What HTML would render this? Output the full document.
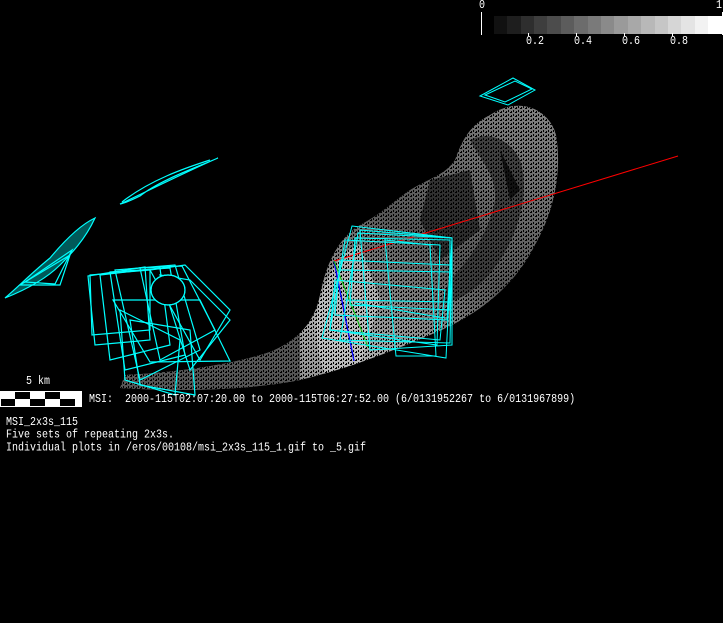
<!DOCTYPE html>
<html><head><meta charset="utf-8"><style>
html,body{margin:0;padding:0;background:#000;width:723px;height:623px;overflow:hidden}
.t{position:absolute;font-family:"Liberation Mono",monospace;font-size:10px;color:#fff;white-space:pre;line-height:12px;transform:scaleY(1.15);transform-origin:0 0}
</style></head><body>
<svg width="723" height="623" style="position:absolute;left:0;top:0">
<defs>
<linearGradient id="g1" x1="0" y1="1" x2="1" y2="0">
<stop offset="0" stop-color="#555"/><stop offset="0.35" stop-color="#aaa"/><stop offset="0.6" stop-color="#555"/><stop offset="1" stop-color="#888"/>
</linearGradient>
<pattern id="sp" width="5" height="4" patternUnits="userSpaceOnUse">
<rect x="0" y="0" width="2" height="1" fill="#000"/><rect x="3" y="2" width="1" height="2" fill="#000"/><rect x="1" y="3" width="1" height="1" fill="#000"/>
</pattern>
<clipPath id="cb"><path d="M490,115 C520,95 550,110 556,135 C562,170 555,210 535,245 C515,285 480,315 430,335 C390,352 350,368 300,380 C250,390 180,392 120,388 L125,375 C180,372 230,365 270,352 C300,340 315,320 320,295 C325,270 335,240 360,225 C380,215 395,200 410,190 C430,178 445,175 455,160 C462,140 470,125 490,115 Z"/></clipPath>
</defs>
<g>
<rect x="494" y="16" width="14" height="18" fill="#111"/>
<rect x="507" y="16" width="14" height="18" fill="#1e1e1e"/>
<rect x="521" y="16" width="14" height="18" fill="#2e2e2e"/>
<rect x="534" y="16" width="14" height="18" fill="#3e3e3e"/>
<rect x="547" y="16" width="14" height="18" fill="#4c4c4c"/>
<rect x="561" y="16" width="14" height="18" fill="#5c5c5c"/>
<rect x="574" y="16" width="14" height="18" fill="#6c6c6c"/>
<rect x="588" y="16" width="14" height="18" fill="#7a7a7a"/>
<rect x="601" y="16" width="14" height="18" fill="#8a8a8a"/>
<rect x="614" y="16" width="14" height="18" fill="#9a9a9a"/>
<rect x="628" y="16" width="14" height="18" fill="#a8a8a8"/>
<rect x="641" y="16" width="14" height="18" fill="#b8b8b8"/>
<rect x="655" y="16" width="14" height="18" fill="#c6c6c6"/>
<rect x="668" y="16" width="14" height="18" fill="#d6d6d6"/>
<rect x="681" y="16" width="14" height="18" fill="#e4e4e4"/>
<rect x="695" y="16" width="14" height="18" fill="#f2f2f2"/>
<rect x="708" y="16" width="14" height="18" fill="#fff"/>
<line x1="481.5" y1="12" x2="481.5" y2="35" stroke="#fff"/>
<line x1="722.5" y1="12" x2="722.5" y2="35" stroke="#fff"/>
<line x1="528.5" y1="33" x2="528.5" y2="36" stroke="#fff"/>
<line x1="576.5" y1="33" x2="576.5" y2="36" stroke="#fff"/>
<line x1="624.5" y1="33" x2="624.5" y2="36" stroke="#fff"/>
<line x1="672.5" y1="33" x2="672.5" y2="36" stroke="#fff"/>
</g>
<g clip-path="url(#cb)">
<rect x="100" y="90" width="480" height="310" fill="url(#g1)"/>
<path d="M470,140 C490,130 510,140 520,160 C530,190 520,230 500,260 C480,290 460,300 440,305 L450,280 C470,260 490,230 495,200 C497,175 480,160 470,140 Z" fill="#333" opacity="0.8"/>
<path d="M320,300 C330,270 340,250 360,245 L380,300 L360,365 L325,375 C315,350 315,320 320,295 Z" fill="#ccc" opacity="0.6"/>
<path d="M430,180 L470,170 L480,230 L440,260 L420,220 Z" fill="#000" opacity="0.5"/>
<path d="M500,150 L520,190 L510,200 Z" fill="#000" opacity="0.7"/>
<path d="M100,370 L300,330 L300,395 L100,395 Z" fill="#555"/>
<rect x="100" y="90" width="480" height="310" fill="url(#sp)"/>
</g>
<line x1="334" y1="261" x2="678" y2="156" stroke="#f00" stroke-width="1"/>
<line x1="334" y1="261" x2="354" y2="361" stroke="#00f" stroke-width="1.3"/>
<line x1="334" y1="261" x2="368" y2="347" stroke="#0c0" stroke-width="1"/>
<g fill="none" stroke="#0ff" stroke-width="1">
<polygon points="352,226 452,238 446,358 322,338"/>
<polygon points="358,233 452,238 450,343 340,340"/>
<polygon points="345,240 440,245 437,345 330,330"/>
<polygon points="355,238 450,240 450,310 350,305"/>
<polygon points="340,260 450,265 447,320 335,315"/>
<polygon points="335,280 445,290 440,340 330,330"/>
<polygon points="360,230 452,238 452,345 370,350"/>
<polygon points="385,240 430,245 436,356 396,356"/>
<line x1="340" y1="270" x2="452" y2="272"/>
<line x1="345" y1="300" x2="450" y2="302"/>
<line x1="355" y1="303" x2="445" y2="318"/>
<polygon points="480,96 513,78 535,90 508,105"/>
<polygon points="485,95 515,81 532,89 505,102"/>
</g>
<g fill="none" stroke="#0ff" stroke-width="1.2">
<path d="M120,204 C150,190 190,170 218,158 C195,168 160,180 140,196 C132,200 125,203 120,204 Z" fill="#0ff" fill-opacity="0.4"/>
<path d="M122,202 C150,180 185,168 210,160"/>
<path d="M5,298 C20,285 35,270 50,258 C65,240 80,225 95,218 C85,240 70,255 60,265 C45,280 25,290 5,298 Z" fill="#0ff" fill-opacity="0.35"/>
<polygon points="20,285 70,255 60,285"/>
<polygon points="25,282 72,250 55,284"/>
<polygon points="90,275 150,270 150,330 92,335"/>
<polygon points="88,276 145,267 150,340 95,345"/>
<polygon points="100,275 160,268 170,345 110,360"/>
<polygon points="110,272 170,268 185,355 125,370"/>
<polygon points="115,270 175,265 200,350 140,380"/>
<polygon points="140,268 182,266 215,330 160,360"/>
<polygon points="150,270 185,265 230,310 200,360"/>
<polygon points="160,275 190,280 230,320 190,370"/>
<polygon points="113,300 200,300 230,361 150,362"/>
<polygon points="120,310 180,340 175,395 125,380"/>
<polygon points="130,320 190,330 195,395 140,385"/>
<ellipse cx="168" cy="290" rx="17" ry="15" fill="#000"/>
<ellipse cx="168" cy="290" rx="17" ry="15"/>
</g>
<rect x="0" y="391" width="82" height="16" fill="#fff"/>
<rect x="15" y="392" width="15" height="7" fill="#000"/>
<rect x="45" y="392" width="15" height="7" fill="#000"/>
<rect x="1" y="399" width="14" height="7" fill="#000"/>
<rect x="30" y="399" width="15" height="7" fill="#000"/>
<rect x="60" y="399" width="15" height="7" fill="#000"/>
</svg>
<div class="t" style="left:479px;top:0px">0</div>
<div class="t" style="left:716px;top:0px">1</div>
<div class="t" style="left:526px;top:36px">0.2</div>
<div class="t" style="left:574px;top:36px">0.4</div>
<div class="t" style="left:622px;top:36px">0.6</div>
<div class="t" style="left:670px;top:36px">0.8</div>
<div class="t" style="left:26px;top:376px">5 km</div>
<div class="t" style="left:89px;top:394px">MSI:  2000-115T02:07:20.00 to 2000-115T06:27:52.00 (6/0131952267 to 6/0131967899)</div>
<div class="t" style="left:6px;top:417px;line-height:11px">MSI_2x3s_115
Five sets of repeating 2x3s.
Individual plots in /eros/00108/msi_2x3s_115_1.gif to _5.gif</div>
</body></html>
